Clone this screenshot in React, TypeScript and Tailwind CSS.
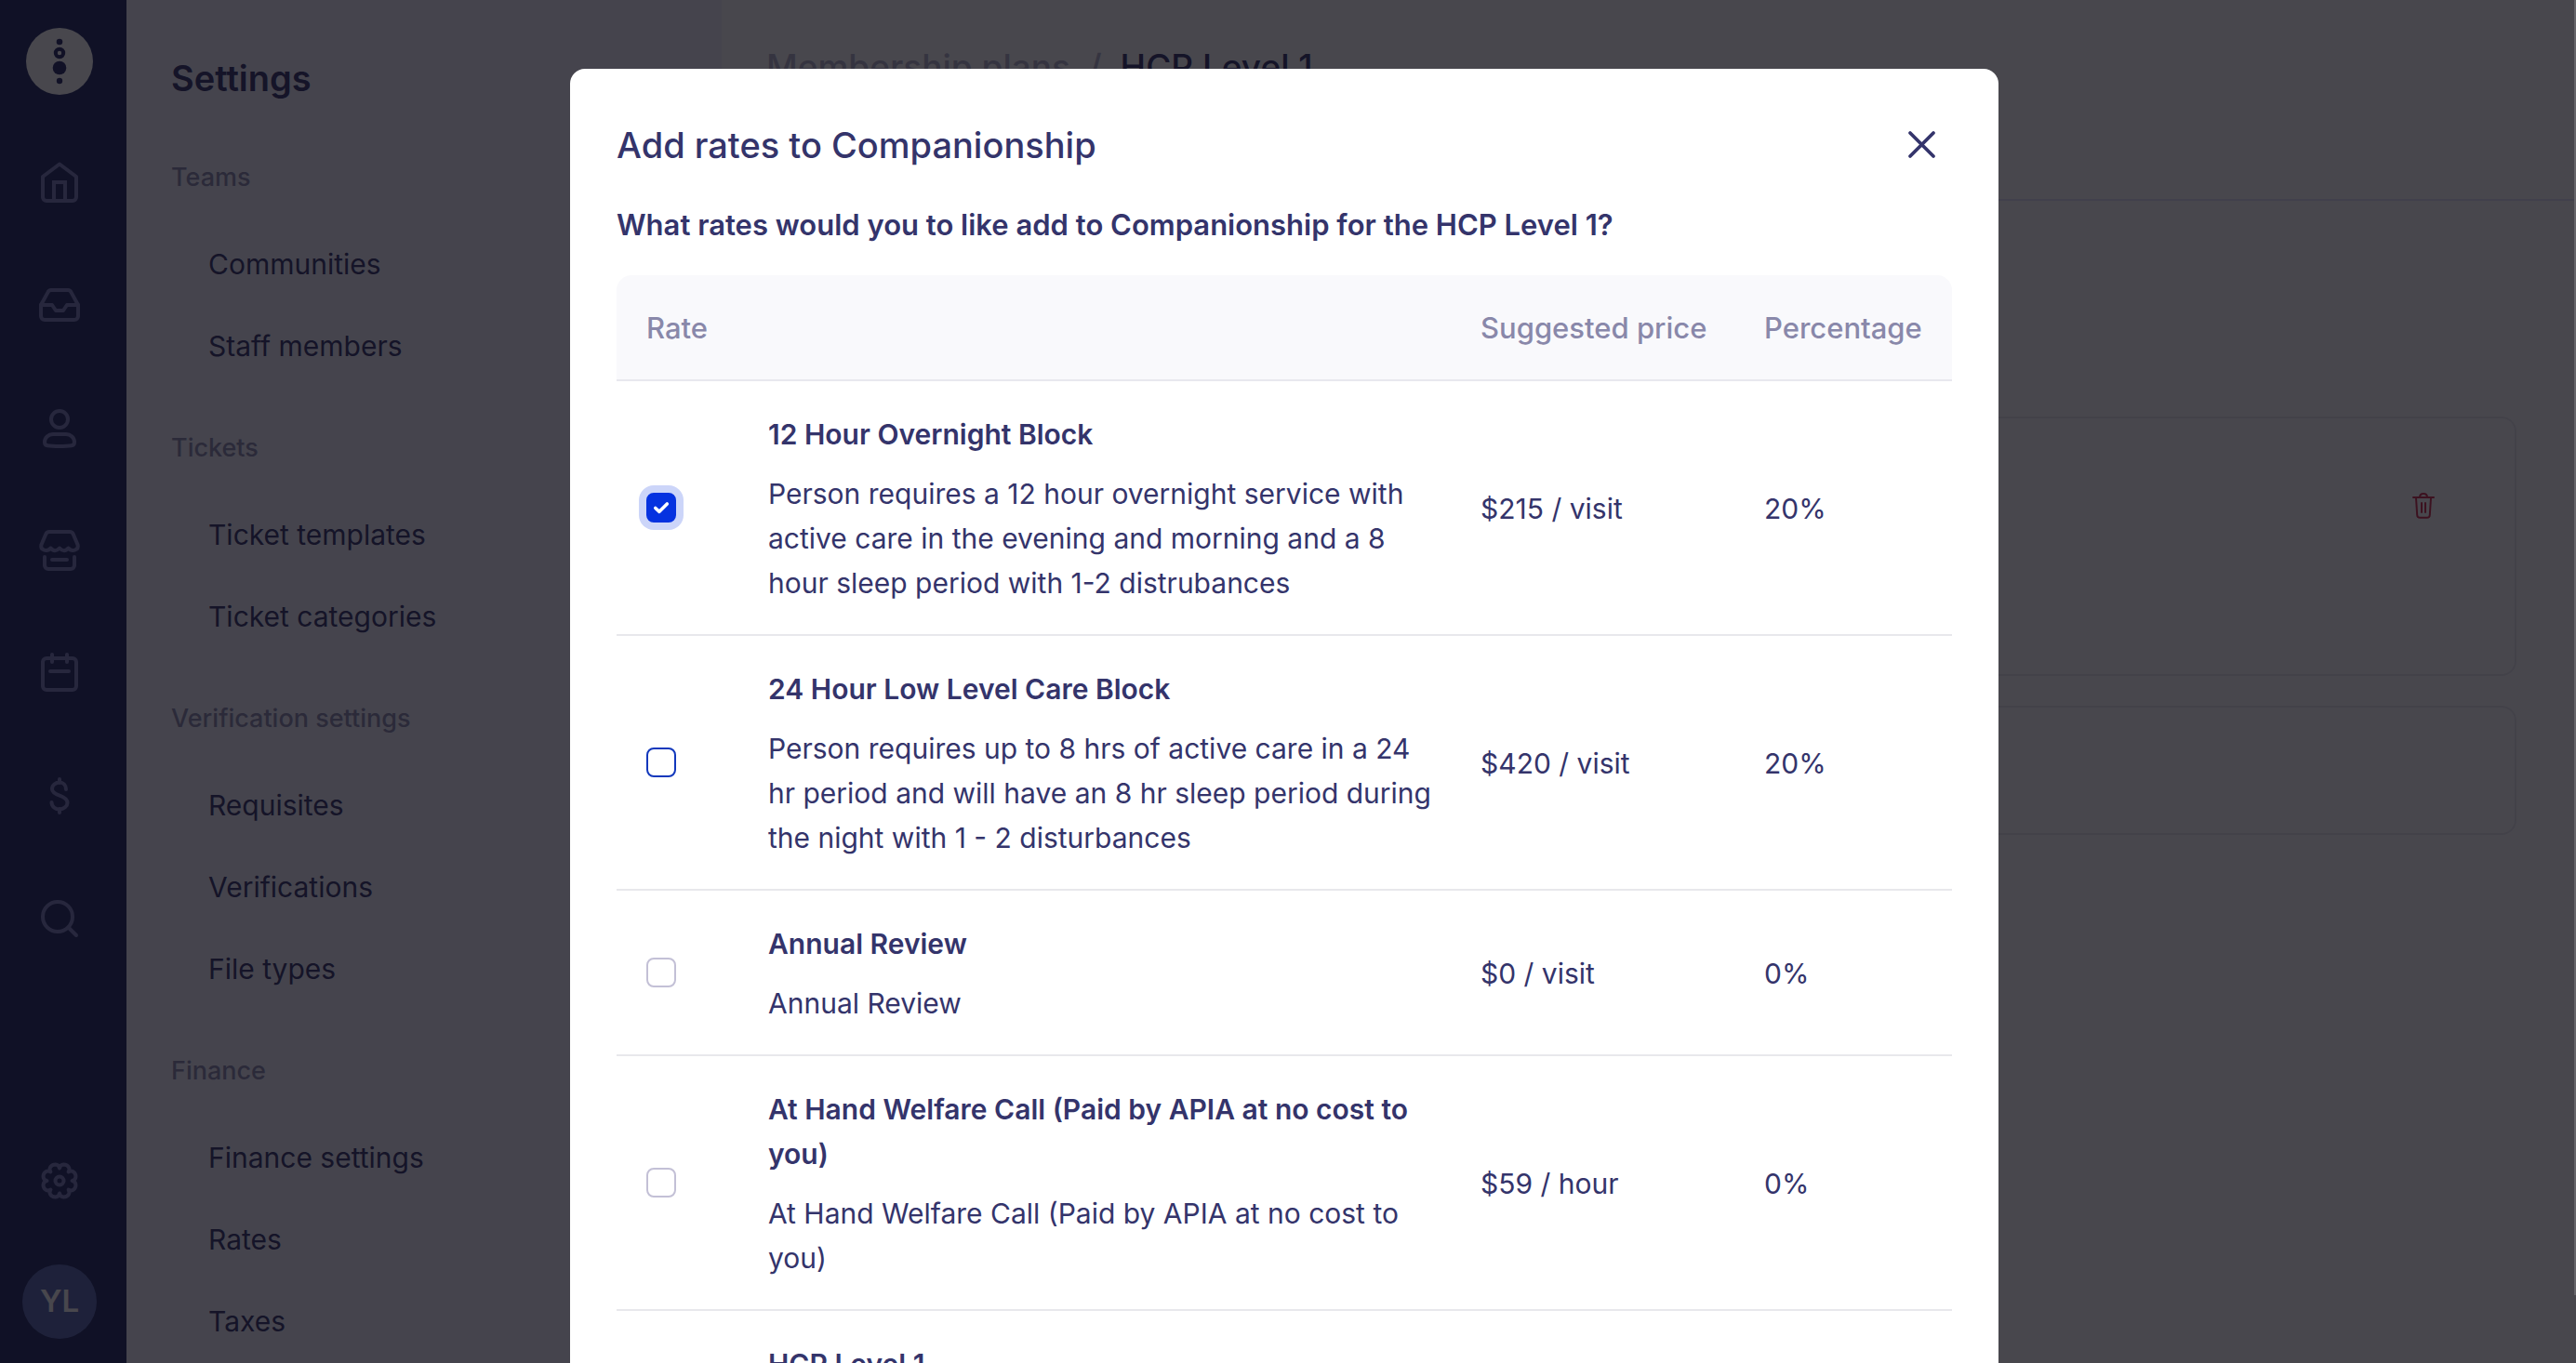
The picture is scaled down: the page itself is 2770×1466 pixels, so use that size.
import { useState } from "react";
import type { ReactNode } from "react";

type Rate = {
  id: string;
  name: string;
  description: string;
  price: string;
  percentage: string;
};

const RATES: Rate[] = [
  {
    id: "overnight-12",
    name: "12 Hour Overnight Block",
    description:
      "Person requires a 12 hour overnight service with active care in the evening and morning and a 8 hour sleep period with 1-2 distrubances",
    price: "$215 / visit",
    percentage: "20%",
  },
  {
    id: "low-care-24",
    name: "24 Hour Low Level Care Block",
    description:
      "Person requires up to 8 hrs of active care in a 24 hr period and will have an 8 hr sleep period during the night with 1 - 2 disturbances",
    price: "$420 / visit",
    percentage: "20%",
  },
  {
    id: "annual-review",
    name: "Annual Review",
    description: "Annual Review",
    price: "$0 / visit",
    percentage: "0%",
  },
  {
    id: "welfare-call",
    name: "At Hand Welfare Call (Paid by APIA at no cost to you)",
    description: "At Hand Welfare Call (Paid by APIA at no cost to you)",
    price: "$59 / hour",
    percentage: "0%",
  },
  {
    id: "hcp-level-1",
    name: "HCP Level 1",
    description: "HCP Level 1",
    price: "$0 / visit",
    percentage: "0%",
  },
];

const SECTIONS = [
  { title: "Teams", items: ["Communities", "Staff members"] },
  { title: "Tickets", items: ["Ticket templates", "Ticket categories"] },
  { title: "Verification settings", items: ["Requisites", "Verifications", "File types"] },
  { title: "Finance", items: ["Finance settings", "Rates", "Taxes"] },
];

// eight-lobed outline for the settings cog
const COG_POINTS = Array.from({ length: 96 }, (_, i) => {
  const angle = (i / 96) * Math.PI * 2;
  const radius = 13.6 + 4.8 * Math.sqrt(Math.abs(Math.sin(angle * 4)));
  return `${(24 + radius * Math.cos(angle)).toFixed(2)},${(24 + radius * Math.sin(angle)).toFixed(2)}`;
}).join(" ");

function Icon({ children }: { children: ReactNode }) {
  return (
    <svg
      viewBox="0 0 48 48"
      className="size-12"
      fill="none"
      stroke="currentColor"
      strokeWidth={4}
      strokeLinecap="round"
      strokeLinejoin="round"
      aria-hidden="true"
    >
      {children}
    </svg>
  );
}

const NAV = [
  {
    label: "Home",
    icon: (
      <>
        <path d="M6 18 24 4.500 42 18V40a4 4 0 0 1-4 4H10a4 4 0 0 1-4-4Z" />
        <path d="M18 44V24H30V44" strokeLinejoin="miter" />
      </>
    ),
  },
  {
    label: "Inbox",
    icon: (
      <>
        <path d="M4 24 11.500 10.400A4 4 0 0 1 15 8H33a4 4 0 0 1 3.500 2.400L44 24V36a4 4 0 0 1-4 4H8a4 4 0 0 1-4-4Z" />
        <path d="M4 24H16L20 30H28L32 24H44" />
      </>
    ),
  },
  {
    label: "People",
    icon: (
      <>
        <circle cx="24" cy="15" r="9" />
        <path d="M8 39.500c0-4.700 4-8.500 9-8.500h14c5 0 9 3.800 9 8.500 0 2.300-1 3.500-3.200 3.800C33 43.900 28.500 44 24 44s-9-.1-12.800-.7C9 43 8 41.800 8 39.500Z" />
      </>
    ),
  },
  {
    label: "Marketplace",
    icon: (
      <>
        <path d="M13 4H35a4 4 0 0 1 3.700 2.500L43.600 18C45 24 37 26 33.500 21.500 31 25 27 25 24 21.500 21 25 17 25 14.500 21.500 11 26 3 24 4.400 18L9.300 6.500A4 4 0 0 1 13 4Z" />
        <path d="M8 31V40a4 4 0 0 0 4 4H36a4 4 0 0 0 4-4V31M16 34H32" />
      </>
    ),
  },
  {
    label: "Calendar",
    icon: (
      <>
        <rect x="6" y="8" width="36" height="34" rx="4" />
        <path d="M16 4V12M32 4V12M14 22H34" />
      </>
    ),
  },
  {
    label: "Billing",
    icon: (
      <path d="M24 6V10M24 38V42M31 17C31 12.500 28 9.500 24 9.500S16 12.500 16 16.500C16 20 19 21.800 24 23.600S32.500 28 32.500 31.500 28.500 38.500 24 38.500 15.500 35.500 15.500 31" />
    ),
  },
  {
    label: "Search",
    icon: (
      <>
        <circle cx="22" cy="22" r="16" />
        <path d="M33.500 33.500 42 42" />
      </>
    ),
  },
];

function Rail() {
  return (
    <nav
      aria-label="Main"
      className="flex h-full w-[136px] shrink-0 flex-col items-center bg-[#212b64] pr-2 pt-[30px] pb-[26px] text-[#7c80c0]"
    >
      <a href="#" aria-label="Dashboard">
        <svg viewBox="0 0 72 72" className="size-[72px]" aria-hidden="true">
          <circle cx="36" cy="36" r="36" fill="#fff" />
          <g fill="#262a66">
            <circle cx="36" cy="15" r="3.300" />
            <circle cx="36" cy="27" r="4.200" fill="none" stroke="#262a66" strokeWidth="4" />
            <circle cx="36" cy="43" r="7.300" />
            <circle cx="36" cy="57" r="3.200" />
          </g>
        </svg>
      </a>
      <div className="mt-[70px] flex flex-col gap-[84px]">
        {NAV.map((item) => (
          <a key={item.label} href="#" aria-label={item.label}>
            <Icon>{item.icon}</Icon>
          </a>
        ))}
      </div>
      <a href="#" aria-label="Settings" className="mt-auto">
        <Icon>
          <polygon points={COG_POINTS} />
          <circle cx="24" cy="24" r="4.500" />
        </Icon>
      </a>
      <button
        type="button"
        className="mt-[66px] size-20 rounded-full bg-[#5a69b4] text-[33px] font-semibold text-white"
      >
        YL
      </button>
    </nav>
  );
}

function Sidebar() {
  return (
    <aside className="h-full w-[640px] shrink-0 overflow-hidden bg-[#f2f4ff] pt-[52px] pl-12">
      <h1 className="text-[38px] leading-16 font-semibold">Settings</h1>
      <div className="mt-[51px] flex flex-col gap-[42px]">
        {SECTIONS.map((section) => (
          <section key={section.title}>
            <h2 className="mb-[25px] text-[27px] leading-12 font-medium text-[#8c8cb0]">
              {section.title}
            </h2>
            <ul>
              {section.items.map((item) => (
                <li key={item}>
                  <a href="#" className="block py-5 pl-10 text-[30px] leading-12">
                    {item}
                  </a>
                </li>
              ))}
            </ul>
          </section>
        ))}
      </div>
    </aside>
  );
}

function PlanPage() {
  return (
    <main className="min-w-0 flex-1 bg-white">
      <header className="border-b-2 border-[#e4e4fa] pt-[40px] pb-[110px] pl-12">
        <div className="flex gap-5 text-[37px] leading-16 font-medium">
          <a href="#" className="text-[#b4b4cc]">
            Membership plans
          </a>
          <span className="text-[#b4b4cc]">/</span>
          <span>HCP Level 1</span>
        </div>
      </header>
      <div className="flex flex-col gap-8 pt-[232px] pr-16 pl-12">
        <div className="flex h-[279px] items-start justify-end rounded-2xl border-2 border-[#ebebf0] pt-[78px] pr-[82px]">
          <button type="button" aria-label="Delete rate" className="text-[#d02c4c]">
            <svg
              viewBox="0 0 32 32"
              className="size-8"
              fill="none"
              stroke="currentColor"
              strokeWidth={2}
              strokeLinecap="round"
              strokeLinejoin="round"
              aria-hidden="true"
            >
              <path d="M5 7H27M12 7c0-2.700 1.500-4 4-4s4 1.300 4 4M8 7.500 9.200 26a3 3 0 0 0 3 2.800h7.600a3 3 0 0 0 3-2.800L24 7.500M14 13V23M18 13V23" />
            </svg>
          </button>
        </div>
        <div className="h-[139px] rounded-2xl border-2 border-[#ebebf0]" />
      </div>
    </main>
  );
}

type RateCheckboxProps = {
  id: string;
  checked: boolean;
  active: boolean;
  onChange: () => void;
};

function RateCheckbox({ id, checked, active, onChange }: RateCheckboxProps) {
  return (
    <span className="grid size-8">
      <input
        id={id}
        type="checkbox"
        checked={checked}
        onChange={onChange}
        className={`col-start-1 row-start-1 size-8 appearance-none rounded-lg border-2 outline-none checked:border-[#0632e0] checked:bg-[#0632e0] checked:ring-8 checked:ring-[#ccd5f9] ${
          active ? "border-[#1238bc]" : "border-[#c3c0d6]"
        }`}
      />
      {checked && (
        <svg
          viewBox="0 0 32 32"
          className="pointer-events-none col-start-1 row-start-1 size-8"
          fill="none"
          stroke="#fff"
          strokeWidth={3.6}
          strokeLinecap="round"
          strokeLinejoin="round"
          aria-hidden="true"
        >
          <path d="M9.800 16.500 14 20.300 22.300 12" />
        </svg>
      )}
    </span>
  );
}

function AddRatesModal() {
  const [selected, setSelected] = useState<string[]>(["overnight-12"]);

  const toggle = (id: string) => {
    setSelected((prev) => (prev.includes(id) ? prev.filter((x) => x !== id) : [...prev, id]));
  };

  return (
    <div
      role="dialog"
      aria-modal="true"
      aria-labelledby="modal-title"
      className="mt-[74px] w-full max-w-[1536px] rounded-2xl bg-white p-[50px]"
    >
      <div className="flex items-center justify-between">
        <h2 id="modal-title" className="text-[38px] leading-16 font-medium">
          Add rates to Companionship
        </h2>
        <button type="button" aria-label="Close" className="mr-2">
          <svg
            viewBox="0 0 48 48"
            className="size-12"
            fill="none"
            stroke="currentColor"
            strokeWidth={3.8}
            strokeLinecap="round"
            aria-hidden="true"
          >
            <path d="M11 11 36 36M36 11 11 36" />
          </svg>
        </button>
      </div>
      <p className="mt-[30px] text-[31px] leading-12 font-semibold">
        What rates would you to like add to Companionship for the HCP Level 1?
      </p>
      <table className="mt-[30px] w-full table-fixed border-separate border-spacing-0 text-left text-[30px] leading-12">
        <colgroup>
          <col className="w-[131px]" />
          <col />
          <col className="w-[305px]" />
          <col className="w-[234px]" />
        </colgroup>
        <thead className="text-[31px] text-[#8988aa]">
          <tr>
            <th
              colSpan={2}
              className="rounded-tl-2xl border-b-2 border-[#e8e8ee] bg-[#f9f9fc] px-8 pt-[33px] pb-[31px] font-medium"
            >
              Rate
            </th>
            <th className="border-b-2 border-[#e8e8ee] bg-[#f9f9fc] pt-[33px] pb-[31px] pl-8 font-medium whitespace-nowrap">
              Suggested price
            </th>
            <th className="rounded-tr-2xl border-b-2 border-[#e8e8ee] bg-[#f9f9fc] pt-[33px] pb-[31px] pl-8 font-medium">
              Percentage
            </th>
          </tr>
        </thead>
        <tbody>
          {RATES.map((rate) => (
            <tr key={rate.id}>
              <td className="border-b-2 border-[#e8e8ec] p-8">
                <RateCheckbox
                  id={rate.id}
                  checked={selected.includes(rate.id)}
                  active={rate.id === "low-care-24"}
                  onChange={() => toggle(rate.id)}
                />
              </td>
              <td className="border-b-2 border-[#e8e8ec] pt-[33px] pr-4 pb-[31px] pl-8">
                <label htmlFor={rate.id} className="flex flex-col gap-4">
                  <span className="font-semibold">{rate.name}</span>
                  <span>{rate.description}</span>
                </label>
              </td>
              <td className="border-b-2 border-[#e8e8ec] px-8 pt-[33px] pb-[31px]">{rate.price}</td>
              <td className="border-b-2 border-[#e8e8ec] px-8 pt-[33px] pb-[31px]">
                {rate.percentage}
              </td>
            </tr>
          ))}
        </tbody>
      </table>
    </div>
  );
}

export default function App() {
  return (
    <div className="h-screen overflow-hidden font-['Inter',sans-serif] text-[#34346b]">
      <div className="flex h-full">
        <Rail />
        <Sidebar />
        <PlanPage />
      </div>
      <div className="fixed inset-0 flex items-start justify-center overflow-y-auto bg-[rgb(11,9,17)]/75 pr-2 [scrollbar-width:none]">
        <AddRatesModal />
      </div>
      {/* scroll thumb at the window edge */}
      <div className="fixed top-0 right-0 h-[95%] w-[2px] bg-[#66656a]" />
    </div>
  );
}
